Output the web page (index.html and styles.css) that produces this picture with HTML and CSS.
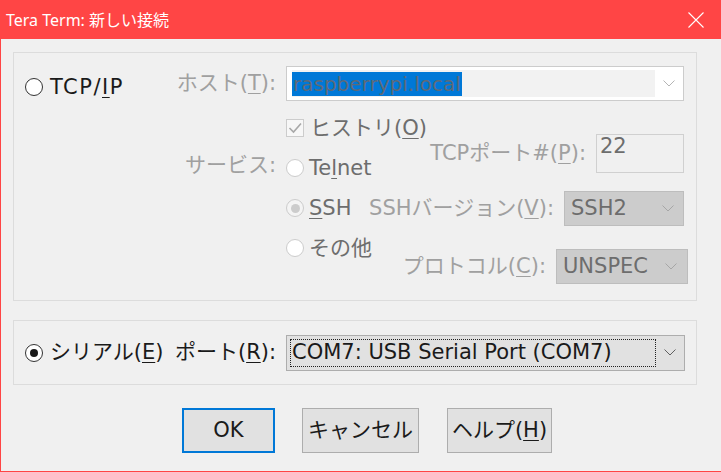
FILE: index.html
```html
<!DOCTYPE html>
<html lang="ja">
<head>
<meta charset="utf-8">
<title>Tera Term: 新しい接続</title>
<link rel="stylesheet" href="styles.css">
</head>
<body>
<div class="window">
  <header class="titlebar">
    <span class="title">Tera Term: 新しい接続</span>
    <svg class="close" width="16" height="16" viewBox="0 0 16 16"><path d="M0.5 0.5 L15.5 15.5 M15.5 0.5 L0.5 15.5" stroke="#fff" stroke-width="1.1" fill="none"/></svg>
  </header>
  <main class="content">
    <section class="group tcp">
      <div class="col-radio">
        <div class="opt main"><span class="radio"></span><span class="wide">TCP/<u>I</u>P</span></div>
      </div>
      <div class="col-labels">
        <div class="lbl host-lbl">ホスト(<u>T</u>):</div>
        <div class="lbl svc-lbl">サービス:</div>
      </div>
      <div class="col-controls">
        <div class="combo host">
          <div class="edit"><span class="sel">raspberrypi.local</span></div>
          <span class="chev"><svg width="12" height="7" viewBox="0 0 12 7"><polyline points="0.5,0.5 6,6 11.5,0.5" fill="none" stroke="#b4b4b4" stroke-width="1"/></svg></span>
        </div>
        <div class="svc">
          <div class="svc-left">
            <div class="opt dim"><span class="check"><svg width="16" height="16" viewBox="0 0 16 16"><polyline points="2.5,8 6.5,12 14,3.5" fill="none" stroke="#a8a8a8" stroke-width="1.6"/></svg></span><span>ヒストリ(<u>O</u>)</span></div>
            <div class="opt dim"><span class="radio dis"></span><span>Te<u>l</u>net</span></div>
            <div class="opt dim"><span class="radio dis on"></span><span><u>S</u>SH</span></div>
            <div class="opt dim"><span class="radio dis"></span><span>その他</span></div>
          </div>
          <div class="svc-right">
            <div class="field tcpport">
              <span class="flbl">TCPポート#(<u>P</u>):</span>
              <span class="input">22</span>
            </div>
            <div class="field sshver">
              <span class="flbl">SSHバージョン(<u>V</u>):</span>
              <span class="select"><span>SSH2</span><svg width="12" height="7" viewBox="0 0 12 7"><polyline points="0.5,0.5 6,6 11.5,0.5" fill="none" stroke="#a6a6a6" stroke-width="1"/></svg></span>
            </div>
            <div class="field proto">
              <span class="flbl">プロトコル(<u>C</u>):</span>
              <span class="select"><span>UNSPEC</span><svg width="12" height="7" viewBox="0 0 12 7"><polyline points="0.5,0.5 6,6 11.5,0.5" fill="none" stroke="#a6a6a6" stroke-width="1"/></svg></span>
            </div>
          </div>
        </div>
      </div>
    </section>

    <section class="group serial">
      <div class="col-radio">
        <div class="opt main"><span class="radio on"></span><span>シリアル(<u>E</u>)</span></div>
      </div>
      <div class="col-labels">
        <div class="lbl port-lbl">ポート(<u>R</u>):</div>
      </div>
      <div class="col-controls">
        <div class="combo port">
          <div class="focus">COM7: USB Serial Port (COM7)</div>
          <span class="chev"><svg width="12" height="7" viewBox="0 0 12 7"><polyline points="0.5,0.5 6,6 11.5,0.5" fill="none" stroke="#606060" stroke-width="1"/></svg></span>
        </div>
      </div>
    </section>

    <div class="buttons">
      <button class="btn ok">OK</button>
      <button class="btn cancel">キャンセル</button>
      <button class="btn help">ヘルプ(<u>H</u>)</button>
    </div>
  </main>
</div>
</body>
</html>
```

FILE: styles.css
```css
* { box-sizing: border-box; }
html, body { margin: 0; padding: 0; }
body {
  background: #f0f0f0;
  font-family: "DejaVu Sans", "Noto Sans CJK JP", sans-serif;
  font-size: 21px;
  color: #1a1a1a;
}
u { text-decoration: underline; text-underline-offset: 3px; text-decoration-thickness: 1px; }

.window {
  width: 721px;
  height: 472px;
  border-left: 1px solid #ff4545;
  border-bottom: 1px solid #ff4545;
  background: #f0f0f0;
  display: flex;
  flex-direction: column;
  overflow: hidden;
}

.titlebar {
  height: 39px;
  flex: none;
  background: #ff4545;
  display: flex;
  align-items: center;
  justify-content: space-between;
  padding: 0 17px 0 5px;
  color: #fff;
  font-family: "Noto Sans", "Noto Sans CJK JP", sans-serif;
  font-size: 16px;
}
.title { line-height: 1; padding-top: 1px; }
.close { display: block; }

.content { padding: 13px 12px 0 12px; }

.group {
  width: 684px;
  border: 1px solid #dcdcdc;
  display: flex;
  padding-left: 11px;
}
.group.tcp { height: 249px; padding-top: 13px; }
.group.serial { height: 65px; margin-top: 19px; align-items: center; }

.col-radio { width: 158px; flex: none; }
.col-labels { width: 93px; flex: none; margin-right: 10px; }
.col-controls { width: 398px; flex: none; }

.tcp .col-radio { padding-top: 7px; }

.opt {
  display: flex;
  align-items: center;
  gap: 7px;
  white-space: nowrap;
  line-height: 1;
}
.opt.main { height: 28px; color: #1a1a1a; }
.opt.dim { height: 40px; color: #6d6d6d; gap: 5px; }
.wide { letter-spacing: 1.5px; }

.radio {
  width: 18px;
  height: 18px;
  flex: none;
  border-radius: 50%;
  border: 1.5px solid #333;
  background: #fff;
  display: inline-flex;
  align-items: center;
  justify-content: center;
}
.radio.on::after {
  content: "";
  width: 8px;
  height: 8px;
  border-radius: 50%;
  background: #1a1a1a;
}
.radio.dis { border: 1px solid #cccccc; }
.radio.dis.on { background: #f4f4f4; }
.radio.dis.on::after { background: #cccccc; width: 9px; height: 9px; }

.check {
  width: 18px;
  height: 18px;
  flex: none;
  border: 1px solid #cccccc;
  background: #f7f7f7;
  display: inline-flex;
  align-items: center;
  justify-content: center;
  margin-right: 1px;
}
.check svg { display: block; }

.lbl {
  display: flex;
  align-items: center;
  justify-content: flex-end;
  white-space: nowrap;
  line-height: 1;
  color: #a0a0a0;
}
.host-lbl { height: 35px; }
.svc-lbl { height: 30px; margin-top: 49px; }
.port-lbl { height: 36px; color: #1a1a1a; }

.combo {
  display: flex;
  align-items: stretch;
}
.combo.host {
  height: 35px;
  border: 1px solid #cccccc;
  background: #fff;
  padding: 3px 0 3px 5px;
}
.edit {
  width: 363px;
  background: #f2f2f2;
  display: flex;
  align-items: center;
}
.sel {
  background: #0078d7;
  color: #5f6a78;
  font-size: 20px;
  line-height: 24px;
  height: 24px;
  padding: 0 1px;
}
.chev {
  flex: 1;
  display: flex;
  align-items: center;
  justify-content: center;
}
.chev svg { display: block; }

.combo.port {
  width: 399px;
  height: 36px;
  border: 1px solid #adadad;
  background: #e1e1e1;
  padding: 3px 0 3px 3px;
}
.focus {
  width: 366px;
  border: 1px dotted #222;
  display: flex;
  align-items: center;
  padding-left: 1px;
  white-space: nowrap;
  line-height: 1;
  color: #1a1a1a;
}

.svc { display: flex; }
.svc-left { width: 70px; flex: none; padding-top: 7px; }
.svc-right { flex: 1; min-width: 0; display: flex; flex-direction: column; align-items: stretch; }

.field {
  display: flex;
  justify-content: flex-end;
  align-items: center;
  gap: 10px;
  white-space: nowrap;
  line-height: 1;
}
.flbl { color: #a0a0a0; }
.field.tcpport { margin-top: 33px; height: 39px; }
.field.sshver { margin-top: 18px; height: 35px; }
.field.proto { margin-top: 23px; height: 35px; margin-right: -4px; }

.input {
  width: 88px;
  height: 39px;
  flex: none;
  border: 1px solid #d0d0d0;
  background: #f0f0f0;
  color: #6d6d6d;
  line-height: 22px;
  padding: 0 0 0 3px;
  align-self: stretch;
}

.select {
  height: 35px;
  flex: none;
  border: 1px solid #bdbdbd;
  background: #cccccc;
  color: #6d6d6d;
  display: flex;
  align-items: center;
  justify-content: space-between;
  padding: 0 9px 0 6px;
}
.sshver .select { width: 120px; }
.proto .select { width: 132px; padding-right: 10px; }
.select svg { display: block; }

.buttons {
  display: flex;
  gap: 27px;
  margin-top: 23px;
  padding-left: 169px;
}
.btn {
  height: 45px;
  border: 1px solid #adadad;
  background: #e1e1e1;
  font-family: "DejaVu Sans", "Noto Sans CJK JP", sans-serif;
  font-size: 21px;
  color: #1a1a1a;
  padding: 0;
  line-height: 1;
  display: flex;
  align-items: center;
  justify-content: center;
  white-space: nowrap;
}
.btn.ok { width: 93px; border: 2px solid #0078d7; }
.btn.cancel { width: 117px; }
.btn.help { width: 105px; margin-left: 1px; }
```
